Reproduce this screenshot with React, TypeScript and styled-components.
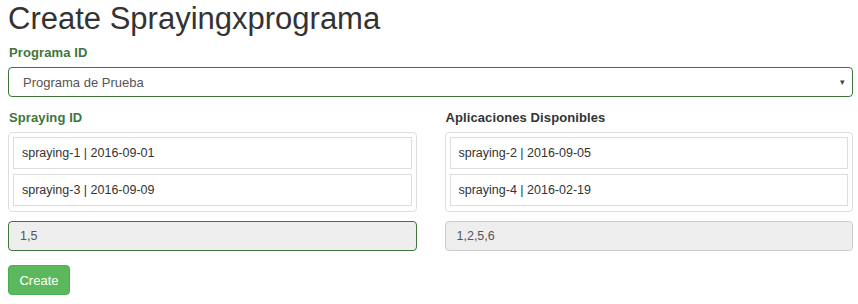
import React from "react";
import styled, { createGlobalStyle } from "styled-components";

const GlobalStyle = createGlobalStyle`
  body {
    margin: 0;
    background: #fff;
    font-family: "Liberation Sans", Arial, sans-serif;
    color: #333;
  }
`;

const sprayings = ["spraying-1 | 2016-09-01", "spraying-3 | 2016-09-09"];
const available = ["spraying-2 | 2016-09-05", "spraying-4 | 2016-02-19"];

function App() {
  return (
    <Page>
      <GlobalStyle />
      <Title>Create Sprayingxprograma</Title>
      <Label success>Programa ID</Label>
      <Select>
        <span>Programa de Prueba</span>
        <Caret>▾</Caret>
      </Select>
      <Columns>
        <div>
          <Label success>Spraying ID</Label>
          <ListPanel>
            {sprayings.map((s) => (
              <ListItem key={s}>{s}</ListItem>
            ))}
          </ListPanel>
          <ReadOnlyInput success>1,5</ReadOnlyInput>
        </div>
        <div>
          <Label>Aplicaciones Disponibles</Label>
          <ListPanel>
            {available.map((s) => (
              <ListItem key={s}>{s}</ListItem>
            ))}
          </ListPanel>
          <ReadOnlyInput>1,2,5,6</ReadOnlyInput>
        </div>
      </Columns>
      <CreateButton>Create</CreateButton>
    </Page>
  );
}

export default App;

const Page = styled.div`
  padding: 0 5px 0 8px;
  width: 845px;
`;

const Title = styled.h1`
  margin: 1px 0 0;
  font-size: 31px;
  font-weight: 400;
  line-height: 36px;
  color: #333;
`;

const Label = styled.div<{ success?: boolean }>`
  margin: 8px 0 6px 1px;
  font-size: 13px;
  font-weight: 700;
  line-height: 16px;
  letter-spacing: 0.1px;
  color: ${(p) => (p.success ? "#3c763d" : "#333")};
`;

const Select = styled.div`
  box-sizing: border-box;
  height: 30px;
  border: 1px solid #3c763d;
  border-radius: 4px;
  padding: 0 7px 0 14px;
  display: flex;
  align-items: center;
  justify-content: space-between;
  font-size: 13px;
  color: #555;
`;

const Caret = styled.span`
  font-size: 9px;
  color: #444;
`;

const Columns = styled.div`
  display: grid;
  grid-template-columns: 1fr 1fr;
  column-gap: 28px;
  margin-top: 13px;

  ${Label} {
    margin-top: 0;
  }
`;

const ListPanel = styled.div`
  border: 1px solid #ddd;
  border-radius: 4px;
  padding: 4px 4px 5px;
  display: flex;
  flex-direction: column;
  gap: 5px;
`;

const ListItem = styled.div`
  box-sizing: border-box;
  height: 32px;
  border: 1px solid #ddd;
  padding: 0 8px;
  display: flex;
  align-items: center;
  font-size: 12.5px;
  color: #333;
`;

const ReadOnlyInput = styled.div<{ success?: boolean }>`
  box-sizing: border-box;
  margin-top: 9px;
  height: 30px;
  border: 1px solid ${(p) => (p.success ? "#3c763d" : "#ccc")};
  border-radius: 4px;
  background: #eee;
  padding: 0 11px;
  display: flex;
  align-items: center;
  font-size: 12.5px;
  color: #555;
`;

const CreateButton = styled.button`
  margin-top: 14px;
  box-sizing: border-box;
  width: 62px;
  height: 30px;
  border: 1px solid #4cae4c;
  border-radius: 4px;
  background: #5cb85c;
  color: #fff;
  font-family: "Liberation Sans", Arial, sans-serif;
  font-size: 13px;
  padding: 0;
`;
